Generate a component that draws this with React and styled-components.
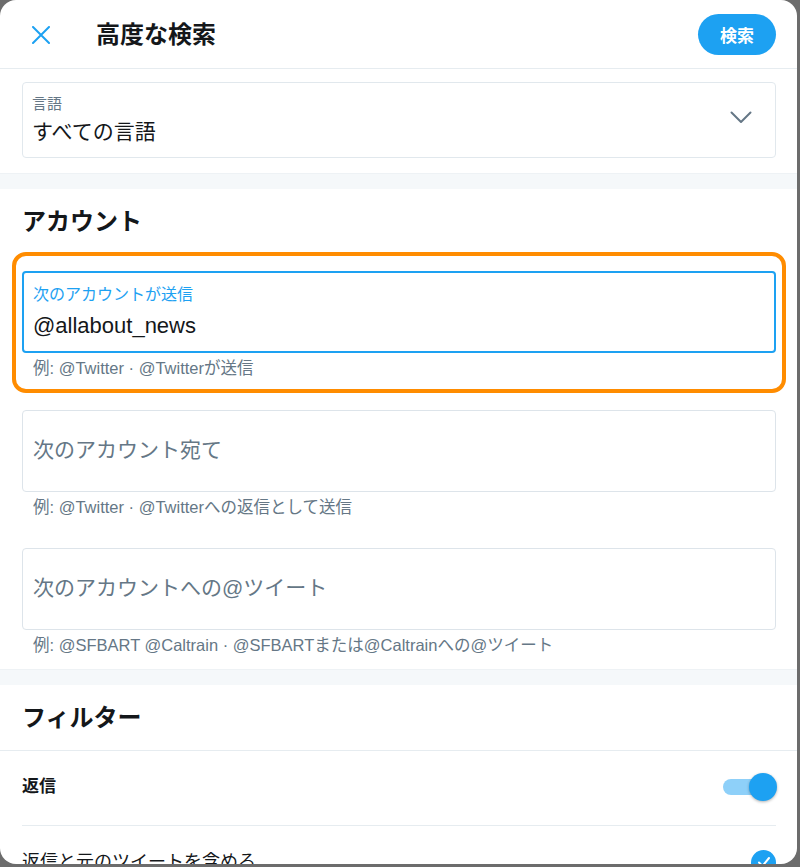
import styled, { createGlobalStyle } from 'styled-components';

const FONT = `"Liberation Sans", "Noto Sans CJK JP", sans-serif`;

const GlobalStyle = createGlobalStyle`
  html, body {
    margin: 0;
    padding: 0;
    height: 100%;
    overflow: hidden;
  }
  body {
    background: #6c6c6c;
    font-family: ${FONT};
    color: #14171a;
  }
`;

export default function App() {
    return (
        <>
            <GlobalStyle />
            <Overlay>
                <Modal>
                    <Header>
                        <CloseButton aria-label="閉じる">
                            <svg width="18" height="18" viewBox="0 0 18 18">
                                <path d="M1 1 L17 17 M17 1 L1 17" stroke="#1da1f2" strokeWidth="2" strokeLinecap="round" fill="none" />
                            </svg>
                        </CloseButton>
                        <Title>高度な検索</Title>
                        <SearchButton>検索</SearchButton>
                    </Header>

                    <Body>
                        <SelectSection>
                            <SelectBox>
                                <SelectText>
                                    <FieldLabel>言語</FieldLabel>
                                    <FieldValue>すべての言語</FieldValue>
                                </SelectText>
                                <svg width="22" height="13" viewBox="0 0 22 13">
                                    <polyline points="1.5,1.5 11,11 20.5,1.5" stroke="#657786" strokeWidth="2" fill="none" strokeLinecap="round" strokeLinejoin="round" />
                                </svg>
                            </SelectBox>
                        </SelectSection>

                        <Band />

                        <SectionTitle>アカウント</SectionTitle>

                        <Fields>
                            <Highlight>
                                <Field $focused>
                                    <FieldLabel $focused>次のアカウントが送信</FieldLabel>
                                    <FieldValue $latin>@allabout_news</FieldValue>
                                </Field>
                                <Hint>例: @Twitter · @Twitterが送信</Hint>
                            </Highlight>

                            <FieldGroup>
                                <Field $empty>
                                    <Placeholder>次のアカウント宛て</Placeholder>
                                </Field>
                                <Hint>例: @Twitter · @Twitterへの返信として送信</Hint>
                            </FieldGroup>

                            <FieldGroup>
                                <Field $empty>
                                    <Placeholder>次のアカウントへの@ツイート</Placeholder>
                                </Field>
                                <Hint>例: @SFBART @Caltrain · @SFBARTまたは@Caltrainへの@ツイート</Hint>
                            </FieldGroup>
                        </Fields>

                        <Band $top={15} />

                        <SectionTitle $bordered>フィルター</SectionTitle>

                        <Row>
                            <RowLabel $bold>返信</RowLabel>
                            <Toggle>
                                <ToggleTrack />
                                <ToggleKnob />
                            </Toggle>
                        </Row>
                        <Row>
                            <RowLabel>返信と元のツイートを含める</RowLabel>
                            <Check>
                                <svg width="14" height="14" viewBox="0 0 14 14">
                                    <polyline points="2,7.5 5.5,11 12,3" stroke="#fff" strokeWidth="2" fill="none" strokeLinecap="round" strokeLinejoin="round" />
                                </svg>
                            </Check>
                        </Row>
                    </Body>
                </Modal>
            </Overlay>
        </>
    )
}

//Styles
const Overlay = styled.div`
  width: 800px;
  height: 867px;
  overflow: hidden;
`

const Modal = styled.div`
  width: 797px;
  height: 864px;
  background: #fff;
  border-radius: 16px;
  overflow: hidden;
  display: flex;
  flex-direction: column;
`

const Header = styled.div`
  box-sizing: border-box;
  height: 69px;
  flex-shrink: 0;
  display: flex;
  align-items: center;
  padding: 1px 21px 0 21px;
  border-bottom: 1px solid #e6ecf0;
`

const CloseButton = styled.button`
  width: 40px;
  height: 40px;
  border: none;
  background: transparent;
  padding: 0;
  display: flex;
  align-items: center;
  justify-content: center;
`

const Title = styled.h1`
  margin: 0 0 0 35px;
  flex: 1;
  font-size: 24px;
  line-height: 28px;
  font-weight: 700;
  color: #14171a;
`

const SearchButton = styled.button`
  width: 78px;
  height: 41px;
  border: none;
  border-radius: 21px;
  background: #1da1f2;
  color: #fff;
  font-family: ${FONT};
  font-size: 17px;
  font-weight: 700;
  padding: 0;
`

const Body = styled.div`
  flex: 1;
  overflow: hidden;
`

const SelectSection = styled.div`
  padding: 13px 21px 15px 22px;
`

const SelectBox = styled.div`
  box-sizing: border-box;
  height: 76px;
  border: 1px solid #e1e8ed;
  border-radius: 4px;
  display: flex;
  align-items: center;
  justify-content: space-between;
  padding: 0 23px 5px 9px;
`

const SelectText = styled.div`
  display: flex;
  flex-direction: column;
  gap: 6px;
  padding-top: 5px;
`

const FieldLabel = styled.div`
  font-size: ${p => p.$focused ? '16px' : '15px'};
  line-height: 18px;
  color: ${p => p.$focused ? '#1da1f2' : '#657786'};
`

const FieldValue = styled.div`
  font-size: ${p => p.$latin ? '22px' : '21px'};
  line-height: 26px;
  color: #14171a;
`

const Band = styled.div`
  height: 15px;
  margin-top: ${p => p.$top || 0}px;
  background: #f5f8fa;
  border-top: 1px solid #eef2f5;
`

const SectionTitle = styled.h2`
  margin: 0;
  padding: 19px 22px ${p => p.$bordered ? '18px' : '0'};
  font-size: 24px;
  line-height: 28px;
  font-weight: 700;
  color: #14171a;
  border-bottom: ${p => p.$bordered ? '1px solid #e6ecf0' : 'none'};
`

const Fields = styled.div`
  padding: 0 21px 0 22px;
  display: flex;
  flex-direction: column;
`

const Highlight = styled.div`
  margin: 16px -10px 0;
  padding: 15px 6px 12px;
  border: 4px solid #ff8c00;
  border-radius: 14px;
`

const FieldGroup = styled.div`
  margin-top: 17px;
  & + & {
    margin-top: 32px;
  }
`

const Field = styled.div`
  box-sizing: border-box;
  height: 82px;
  border: ${p => p.$focused ? '2px solid #1da1f2' : '1px solid #dde4ea'};
  border-radius: 4px;
  display: flex;
  flex-direction: column;
  justify-content: ${p => p.$empty ? 'center' : 'flex-start'};
  gap: 9px;
  padding: ${p => p.$focused ? '13px 9px 0' : '0 10px 2px'};
`

const Placeholder = styled.div`
  font-size: 21px;
  line-height: 26px;
  color: #657786;
`

const Hint = styled.div`
  margin-top: 6px;
  padding-left: 11px;
  font-size: 16.5px;
  line-height: 18px;
  color: #657786;
`

const Row = styled.div`
  box-sizing: border-box;
  height: 75px;
  margin: 0 21px 0 22px;
  display: flex;
  align-items: center;
  justify-content: space-between;
  border-bottom: 1px solid #e6ecf0;
  padding-bottom: 2px;
`

const RowLabel = styled.div`
  font-size: ${p => p.$bold ? '17px' : '18px'};
  line-height: 22px;
  font-weight: ${p => p.$bold ? 700 : 400};
  color: #14171a;
`

const Toggle = styled.div`
  position: relative;
  width: 54px;
  height: 28px;
  margin-right: -1px;
`

const ToggleTrack = styled.div`
  position: absolute;
  left: 0;
  top: 6px;
  width: 38px;
  height: 16px;
  border-radius: 8px;
  background: #8ed0f9;
`

const ToggleKnob = styled.div`
  position: absolute;
  right: 0;
  top: 0;
  width: 28px;
  height: 28px;
  border-radius: 50%;
  background: #1da1f2;
  box-shadow: 0 1px 3px rgba(0, 0, 0, 0.3);
`

const Check = styled.div`
  width: 25px;
  height: 25px;
  border-radius: 50%;
  background: #1da1f2;
  display: flex;
  align-items: center;
  justify-content: center;
`
